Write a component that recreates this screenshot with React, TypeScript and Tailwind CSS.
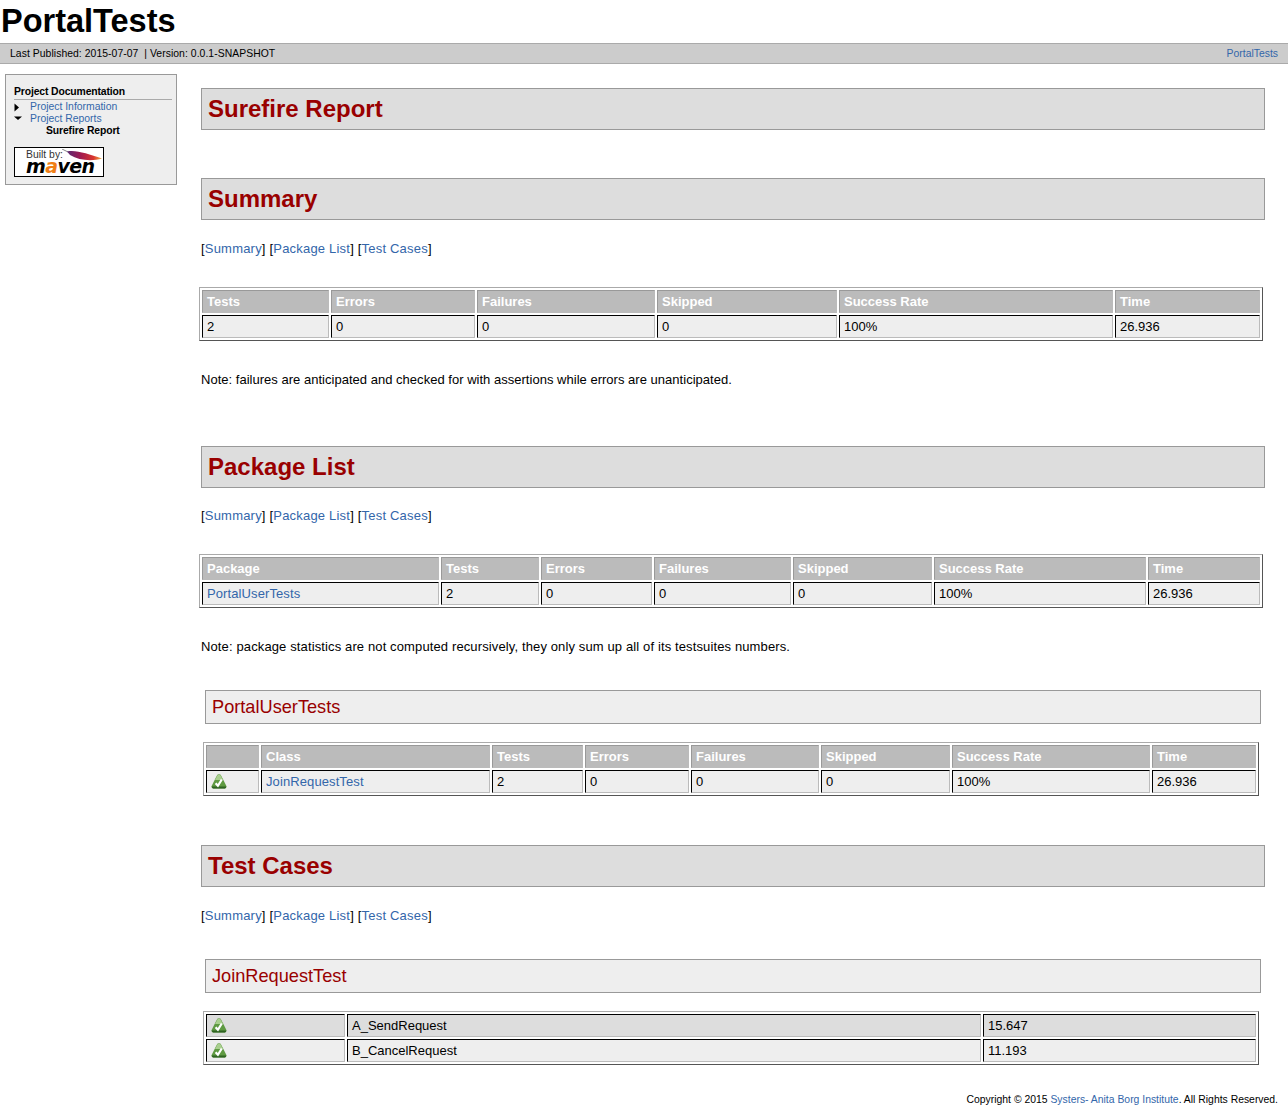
const LINK = 'text-[#36a] no-underline';

const NavLinks = ({ className = 'mt-[21px]' }: { className?: string }) => (
  <p className={`h-[15px] leading-[15px] tracking-[0.2px] ${className}`}>
    [<a className={LINK}>Summary</a>] [<a className={LINK}>Package List</a>] [<a className={LINK}>Test Cases</a>]
  </p>
);

const PassIcon = () => (
  <svg width="16" height="15" viewBox="0 0 16 15" className="block">
    <path d="M6.3 0.8q1.7-1 3.4 0L15.4 12q.6 2-1.4 2.6H2Q0 14 .6 12z" fill="#5f9a42" />
    <path d="M6.6 1q1.4-.7 2.8 0L12 6H4z" fill="#a9cf8e" />
    <path d="M.8 12.5H15.2q.1 1.6-1.2 2.1H2q-1.3-.5-1.2-2.1z" fill="#2f6322" />
    <path d="M4.6 9.3l2.3 2.5L10.8 5.5" fill="none" stroke="#fff" strokeWidth="2.2" />
  </svg>
);

const MavenBadge = () => (
  <div className="relative mt-[10px] w-[90px] h-[30px] border border-black bg-white overflow-hidden">
    <span className="absolute left-[11px] top-[2px] text-[10.4px] leading-[10px] text-[#333]">Built by:</span>
    <svg className="absolute left-[47px] top-[1px]" width="40" height="13" viewBox="0 0 40 13">
      <defs>
        <linearGradient id="feather" x1="0" y1="0" x2="1" y2="0">
          <stop offset="0" stopColor="#5a2a73" />
          <stop offset="0.4" stopColor="#a11a4f" />
          <stop offset="0.75" stopColor="#d8342f" />
          <stop offset="1" stopColor="#f0b040" />
        </linearGradient>
      </defs>
      <path d="M0 0L7 3.5" stroke="#888" strokeWidth="1" />
      <path d="M5 2.5C14 0.5 26 5 40 9.5C30 12.5 17 11.5 8 6z" fill="url(#feather)" />
    </svg>
    <span className="absolute left-[11px] top-[12px] text-[19px] leading-[12px] font-bold italic tracking-[-0.6px] text-black font-['DejaVu_Sans']">
      m<span className="text-[#f07f16]">a</span>ven
    </span>
  </div>
);

type Cell = { text?: string; link?: boolean; icon?: boolean };

const cellOf = (c: string | Cell): Cell => (typeof c === 'string' ? { text: c } : c);

const ReportTable = ({
  cols,
  head,
  rows,
  inset = false,
  className = '',
}: {
  cols: string[];
  head?: string[];
  rows: (string | Cell)[][];
  inset?: boolean;
  className?: string;
}) => (
  <table
    className={`table-fixed border-separate border-spacing-[2px] border border-[#aaa] border-r-[#555] border-b-[#555] ${
      inset ? 'ml-[2px] w-[1056px]' : 'ml-[-2px] w-[1064px]'
    } ${className}`}
  >
    <colgroup>
      {cols.map((c, i) => (
        <col key={i} className={c} />
      ))}
    </colgroup>
    <tbody>
      {head && (
        <tr>
          {head.map((h, i) => (
            <th
              key={i}
              className="h-[23px] p-0 pl-[4px] text-left font-bold text-white bg-[#bbb] border border-[#999] border-r-[#bbb] border-b-[#bbb] leading-[15px]"
            >
              {h}
            </th>
          ))}
        </tr>
      )}
      {rows.map((row, r) => (
        <tr key={r}>
          {row.map((raw, i) => {
            const c = cellOf(raw);
            return (
              <td
                key={i}
                className={`h-[23px] p-0 pl-[4px] border border-black border-r-[#bbb] border-b-[#bbb] leading-[15px] ${
                  !head && r === 0 ? 'bg-[#ddd]' : 'bg-[#eee]'
                }`}
              >
                {c.icon ? (
                  <PassIcon />
                ) : c.link ? (
                  <a className={`${LINK} tracking-[0.1px]`}>{c.text}</a>
                ) : (
                  c.text
                )}
              </td>
            );
          })}
        </tr>
      ))}
    </tbody>
  </table>
);

const H2 = ({ children, className = '' }: { children: string; className?: string }) => (
  <h2 className={`h-[42px] pl-[6px] border border-[#999] bg-[#ddd] text-[#900] text-[24px] leading-[40px] font-bold ${className}`}>
    {children}
  </h2>
);

const H3 = ({ children, className = '' }: { children: string; className?: string }) => (
  <h3 className={`mx-[4px] h-[34px] pl-[6px] border border-[#999] bg-[#eee] text-[#900] text-[18.2px] leading-[32px] font-normal ${className}`}>
    {children}
  </h3>
);

const STATS = ['Tests', 'Errors', 'Failures', 'Skipped', 'Success Rate', 'Time'];
const VALUES = ['2', '0', '0', '0', '100%', '26.936'];

export default function App() {
  return (
    <div className="min-h-[1119px] bg-white text-black text-[13px] font-['Liberation_Sans',Arial,sans-serif]">
      <h1 className="h-[43px] pl-[1px] text-[32.5px] leading-[42px] font-bold">PortalTests</h1>

      <div className="h-[21px] flex justify-between items-center pl-[10px] pr-[10px] bg-[#ccc] border-y border-[#aaa] text-[10.4px]">
        <span className="tracking-[0.05px]">Last Published: 2015-07-07 &nbsp;| Version: 0.0.1-SNAPSHOT</span>
        <a className={LINK}>PortalTests</a>
      </div>

      <div className="flex items-start">
        <aside className="ml-[5px] mt-[10px] w-[172px] h-[111px] pl-[8px] pr-[4px] pt-[10px] border border-[#999] bg-[#eee] text-[10.4px] leading-[12px] shrink-0">
          <h5 className="font-bold leading-[14px] border-b border-[#aaa] tracking-[-0.13px]">Project Documentation</h5>
          <ul className="mt-[1px]">
            <li className="flex items-center h-[12px]">
              <svg width="16" height="12" viewBox="0 0 16 12" className="shrink-0">
                <path d="M0.5 2.5L5 6.5L0.5 10.5z" fill="#000" />
              </svg>
              <a className={LINK}>Project Information</a>
            </li>
            <li className="flex items-center h-[12px]">
              <svg width="16" height="12" viewBox="0 0 16 12" className="shrink-0">
                <path d="M0 3.5H8L4 7z" fill="#000" />
              </svg>
              <a className={LINK}>Project Reports</a>
            </li>
            <li className="h-[12px] pl-[32px] font-bold tracking-[-0.13px]">Surefire Report</li>
          </ul>
          <MavenBadge />
        </aside>

        <main className="ml-[24px] mt-[24px] w-[1064px] shrink-0">
          <H2>Surefire Report</H2>
          <H2 className="mt-[48px]">Summary</H2>
          <NavLinks />
          <ReportTable
            className="mt-[31px]"
            cols={['w-[127px]', 'w-[144px]', 'w-[178px]', 'w-[180px]', 'w-[274px]', 'w-[145px]']}
            head={STATS}
            rows={[VALUES]}
          />
          <p className="mt-[31px] h-[15px] leading-[15px] tracking-[0.02px]">
            Note: failures are anticipated and checked for with assertions while errors are unanticipated.
          </p>

          <H2 className="mt-[59px]">Package List</H2>
          <NavLinks className="mt-[20px]" />
          <ReportTable
            className="mt-[31px]"
            cols={['w-[237px]', 'w-[98px]', 'w-[111px]', 'w-[137px]', 'w-[139px]', 'w-[212px]', 'w-[112px]']}
            head={['Package', ...STATS]}
            rows={[[{ text: 'PortalUserTests', link: true }, ...VALUES]]}
          />
          <p className="mt-[31px] h-[15px] leading-[15px] tracking-[0.125px]">
            Note: package statistics are not computed recursively, they only sum up all of its testsuites numbers.
          </p>

          <H3 className="mt-[36px]">PortalUserTests</H3>
          <ReportTable
            inset
            className="mt-[18px]"
            cols={['w-[53px]', 'w-[229px]', 'w-[91px]', 'w-[104px]', 'w-[128px]', 'w-[129px]', 'w-[198px]', 'w-[104px]']}
            head={['', 'Class', ...STATS]}
            rows={[[{ icon: true }, { text: 'JoinRequestTest', link: true }, ...VALUES]]}
          />

          <H2 className="mt-[49px]">Test Cases</H2>
          <NavLinks />
          <H3 className="mt-[36px]">JoinRequestTest</H3>
          <ReportTable
            inset
            className="mt-[18px]"
            cols={['w-[139px]', 'w-[634px]', 'w-[273px]']}
            rows={[
              [{ icon: true }, 'A_SendRequest', '15.647'],
              [{ icon: true }, 'B_CancelRequest', '11.193'],
            ]}
          />
        </main>
      </div>

      <footer className="mt-[28px] pr-[10px] text-right text-[10.4px] leading-[14px]">
        Copyright © 2015 <a className={LINK}>Systers- Anita Borg Institute</a>. All Rights Reserved.
      </footer>
    </div>
  );
}
